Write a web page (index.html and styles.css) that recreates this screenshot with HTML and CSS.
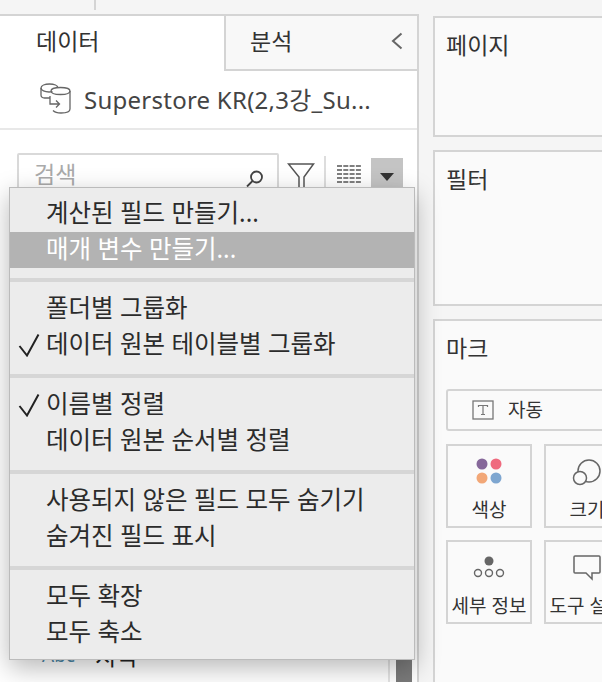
FILE: index.html
```html
<!DOCTYPE html>
<html lang="ko">
<head>
    <meta charset="UTF-8">
    <title>데이터 패널</title>
    <link rel="stylesheet" href="styles.css">
</head>
<body>
    <div class="topbar"><span class="top-tick"></span></div>

    <div class="workspace">
        <!-- 왼쪽 데이터 패널 -->
        <div class="data-panel">
            <div class="tabs">
                <div class="tab tab-active">데이터</div>
                <div class="tab tab-other">
                    <span>분석</span>
                    <svg class="collapse" width="14" height="20" viewBox="0 0 14 20"><path d="M11.5 2.5 3 10l8.5 7.5" fill="none" stroke="#666" stroke-width="2"/></svg>
                </div>
            </div>
            <div class="source">
                <svg width="32" height="31" viewBox="0 0 32 31" fill="none" stroke="#666" stroke-width="1.3">
                    <path d="M10 15H4.500C2 15 1 13.500 1 12V5C1 2.500 5 1 9.500 1S18 2.500 18 5"/>
                    <path d="M1 5c0 2.500 4 4 8 4 1.500 0 2.500-.1 3.500-.4"/>
                    <path d="M11 8c0-2 4-3.500 9.500-3.500S30 6 30 8v18c0 2.500-4 4-9 4-3.500 0-6.500-1-8-2.500"/>
                    <path d="M11 8c0 2.500 4 3.500 9.500 3.500S30 10.500 30 8"/>
                    <path d="M10 13v8h9M16 17.500l3.500 3.500-3.500 3.500"/>
                </svg>
                <span class="source-name">Superstore KR(2,3강_Su...</span>
            </div>
            <div class="search-row">
                <div class="search-box">
                    <span class="placeholder">검색</span>
                    <svg width="20" height="20" viewBox="0 0 20 20" fill="none" stroke="#444" stroke-width="1.800"><circle cx="11.500" cy="8" r="5.500"/><path d="M7.500 12 2 17.500"/></svg>
                </div>
                <svg class="funnel" width="28" height="30" viewBox="0 0 28 30" fill="none" stroke="#555" stroke-width="1.500"><path d="M1.500 2h25L17 15v12.500c0 1.500-5 1.500-5 0V15z"/></svg>
                <span class="row-sep"></span>
                <svg class="list-icon" width="25" height="20" viewBox="0 0 25 20" fill="none" stroke="#555" stroke-width="1.500" stroke-dasharray="5 1.300"><path d="M0 2h25M0 6h25M0 10h25M0 14h25M0 18h25"/></svg>
                <span class="drop-btn"><span class="drop-arrow"></span></span>
            </div>
            <div class="field-list">
                <div class="field-row"><span class="abc">Abc</span><span class="field-name">지역</span></div>
                <div class="scroll-track"><div class="scroll-thumb"></div></div>
            </div>
        </div>

        <!-- 오른쪽 카드 -->
        <div class="side">
            <div class="card card-pages">페이지</div>
            <div class="card card-filters">필터</div>
            <div class="card card-marks">
                <div>마크</div>
                <div class="mark-select">
                    <svg width="22" height="20" viewBox="0 0 22 20" fill="none"><rect x="1" y="1" width="20" height="18" stroke="#777" stroke-width="1.300"/><path d="M6.500 7V5.500h9V7M11 5.500v9M9 14.500h4" stroke="#777" stroke-width="1.200"/></svg>
                    <span>자동</span>
                </div>
                <div class="mark-grid">
                    <div class="mark-btn">
                        <svg width="26" height="26" viewBox="0 0 26 26"><circle cx="6" cy="6" r="5.500" fill="#86689a"/><circle cx="20" cy="6" r="5.500" fill="#ef6a7e"/><circle cx="6" cy="20" r="5.500" fill="#f2a777"/><circle cx="20" cy="20" r="5.500" fill="#7ea6d0"/></svg>
                        <span>색상</span>
                    </div>
                    <div class="mark-btn">
                        <svg width="30" height="28" viewBox="0 0 30 28" fill="none" stroke="#666" stroke-width="1.500"><circle cx="17" cy="13" r="11"/><circle cx="8" cy="20" r="6.500" fill="#fafafa"/></svg>
                        <span>크기</span>
                    </div>
                    <div class="mark-btn">
                        <svg width="32" height="26" viewBox="0 0 32 26" fill="none" stroke="#666" stroke-width="1.400"><circle cx="16" cy="7" r="4.500" fill="#666" stroke="none"/><circle cx="5" cy="19" r="3.500"/><circle cx="16" cy="19" r="3.500"/><circle cx="27" cy="19" r="3.500"/></svg>
                        <span>세부 정보</span>
                    </div>
                    <div class="mark-btn">
                        <svg width="30" height="28" viewBox="0 0 30 28" fill="none" stroke="#666" stroke-width="1.500"><path d="M3 2h24c.6 0 1 .4 1 1v15c0 .6-.4 1-1 1h-7v6l-6-6H3c-.6 0-1-.4-1-1V3c0-.6.4-1 1-1z"/></svg>
                        <span>도구 설명</span>
                    </div>
                </div>
            </div>
        </div>
    </div>

    <!-- 드롭다운 메뉴 -->
    <div class="menu">
        <div class="menu-group menu-group-first">
            <div class="menu-item">계산된 필드 만들기...</div>
            <div class="menu-item menu-item-hover">매개 변수 만들기...</div>
        </div>
        <div class="menu-group">
            <div class="menu-item">폴더별 그룹화</div>
            <div class="menu-item">
                <svg class="check" width="22" height="24" viewBox="0 0 22 24"><path d="M1.500 13 9 22.500 20.500 1.500" fill="none" stroke="#222" stroke-width="2"/></svg>
                데이터 원본 테이블별 그룹화
            </div>
        </div>
        <div class="menu-group">
            <div class="menu-item">
                <svg class="check" width="22" height="24" viewBox="0 0 22 24"><path d="M1.500 13 9 22.500 20.500 1.500" fill="none" stroke="#222" stroke-width="2"/></svg>
                이름별 정렬
            </div>
            <div class="menu-item">데이터 원본 순서별 정렬</div>
        </div>
        <div class="menu-group">
            <div class="menu-item">사용되지 않은 필드 모두 숨기기</div>
            <div class="menu-item">숨겨진 필드 표시</div>
        </div>
        <div class="menu-group">
            <div class="menu-item">모두 확장</div>
            <div class="menu-item">모두 축소</div>
        </div>
    </div>
</body>
</html>
```

FILE: styles.css
```css
/* 기본 */
html, body {
    height: 100%;
}

body {
    margin: 0;
    width: 602px;
    height: 682px;
    overflow: hidden;
    position: relative;
    background-color: #f5f5f5;
    font-family: "Noto Sans", "Noto Sans CJK KR", sans-serif;
    color: #333;
}

.topbar {
    height: 14px;
    padding-left: 94px;
    box-sizing: border-box;
}

.top-tick {
    display: block;
    width: 2px;
    height: 10px;
    background-color: #d4d4d4;
}

.workspace {
    display: flex;
    height: 668px;
}

/* 데이터 패널 */
.data-panel {
    width: 419px;
    flex-shrink: 0;
    box-sizing: border-box;
    border-top: 2px solid #d4d4d4;
    border-right: 2px solid #d4d4d4;
    background-color: #fff;
    display: flex;
    flex-direction: column;
}

.tabs {
    display: flex;
    height: 55px;
}

.tab {
    font-size: 23px;
    box-sizing: border-box;
    line-height: 50px;
}

.tab-active {
    width: 224px;
    padding-left: 36px;
}

.tab-other {
    flex: 1;
    display: flex;
    justify-content: space-between;
    align-items: center;
    padding: 0 13px 4px 24px;
    background-color: #f8f8f8;
    border-left: 2px solid #d4d4d4;
    border-bottom: 2px solid #d4d4d4;
}

.source {
    height: 59px;
    box-sizing: border-box;
    border-bottom: 2px solid #e8e8e8;
    display: flex;
    align-items: center;
    padding: 0 0 2px 40px;
    gap: 12px;
    font-size: 24px;
    letter-spacing: 0.25px;
    color: #444;
}

.source-name {
    white-space: nowrap;
}

.search-row {
    display: flex;
    align-items: flex-start;
    padding: 23px 0 0 17px;
    height: 58px;
    box-sizing: border-box;
}

.search-box {
    width: 262px;
    height: 42px;
    box-sizing: border-box;
    border: 2px solid #d9d9d9;
    border-radius: 2px;
    display: flex;
    justify-content: space-between;
    padding: 4px 12px 0 15px;
    flex-shrink: 0;
}

.placeholder {
    font-size: 23px;
    line-height: 30px;
    color: #aaa;
}

.search-box svg {
    margin-top: 10px;
}

.funnel {
    margin: 9px 0 0 8px;
}

.row-sep {
    width: 2px;
    height: 40px;
    margin: 3px 0 0 9px;
    background-color: #ddd;
}

.list-icon {
    margin: 11px 0 0 11px;
}

.drop-btn {
    width: 32px;
    height: 36px;
    margin: 5px 0 0 9px;
    background-color: #c4c4c4;
    display: flex;
    justify-content: center;
    padding-top: 15px;
    box-sizing: border-box;
}

.drop-arrow {
    width: 0;
    height: 0;
    border-left: 7px solid transparent;
    border-right: 7px solid transparent;
    border-top: 8px solid #333;
}

.field-list {
    flex: 1;
    display: flex;
    justify-content: space-between;
    align-items: flex-end;
    padding-left: 42px;
}

.field-row {
    display: flex;
    gap: 20px;
    align-items: center;
    height: 44px;
    margin-bottom: 5px;
    font-size: 23px;
    color: #222;
}

.abc {
    font-size: 19px;
    color: #4e88a8;
}

.scroll-track {
    width: 29px;
    height: 100%;
    box-sizing: border-box;
    border-left: 2px solid #e4e4e4;
    padding: 0 5px 0 6px;
}

.scroll-thumb {
    height: 100%;
    background-color: #7a7a7a;
}

/* 오른쪽 카드 */
.side {
    margin-left: 14px;
    flex: 1;
    min-width: 0;
    overflow: hidden;
    padding-top: 2px;
}

.card {
    box-sizing: border-box;
    border: 2px solid #d4d4d4;
    border-right: none;
    background-color: #fafafa;
    font-size: 23px;
    line-height: 34px;
    padding: 10px 0 0 11px;
}

.card-pages {
    height: 121px;
}

.card-filters {
    height: 156px;
    margin-top: 13px;
}

.card-marks {
    height: 363px;
    margin-top: 13px;
    border-bottom: none;
    overflow: hidden;
}

.mark-select {
    width: 190px;
    height: 42px;
    margin-top: 24px;
    box-sizing: border-box;
    border: 2px solid #d4d4d4;
    border-radius: 3px;
    display: flex;
    align-items: center;
    gap: 14px;
    padding-left: 24px;
    font-size: 19px;
}

.mark-grid {
    display: grid;
    grid-template-columns: 86px 86px;
    grid-auto-rows: 84px;
    gap: 12px;
    margin-top: 13px;
}

.mark-btn {
    box-sizing: border-box;
    border: 2px solid #d4d4d4;
    display: flex;
    flex-direction: column;
    align-items: center;
    padding: 12px 0 2px;
    font-size: 19px;
    line-height: 28px;
    white-space: nowrap;
    overflow: hidden;
}

.mark-btn span {
    margin-top: auto;
}

/* 메뉴 */
.menu {
    position: absolute;
    left: 9px;
    top: 187px;
    width: 406px;
    box-sizing: border-box;
    background-color: #ececec;
    border: 1px solid #bbb;
    box-shadow: 0 8px 24px rgba(0, 0, 0, 0.28);
    font-size: 24.5px;
    color: #2b2b2b;
}

.menu-group {
    padding: 8px 0 12px;
    border-bottom: 4px solid #d6d6d6;
}

.menu-group-first {
    padding-bottom: 10px;
}

.menu-group:last-child {
    border-bottom: none;
    padding-bottom: 9px;
}

.menu-item {
    position: relative;
    height: 36px;
    line-height: 36px;
    padding-left: 36px;
    white-space: nowrap;
}

.menu-group-first .menu-item {
    line-height: 33px;
}

.menu-item-hover {
    background-color: #b3b3b3;
    color: #fff;
}

.check {
    position: absolute;
    left: 8px;
    top: 7px;
}
```
